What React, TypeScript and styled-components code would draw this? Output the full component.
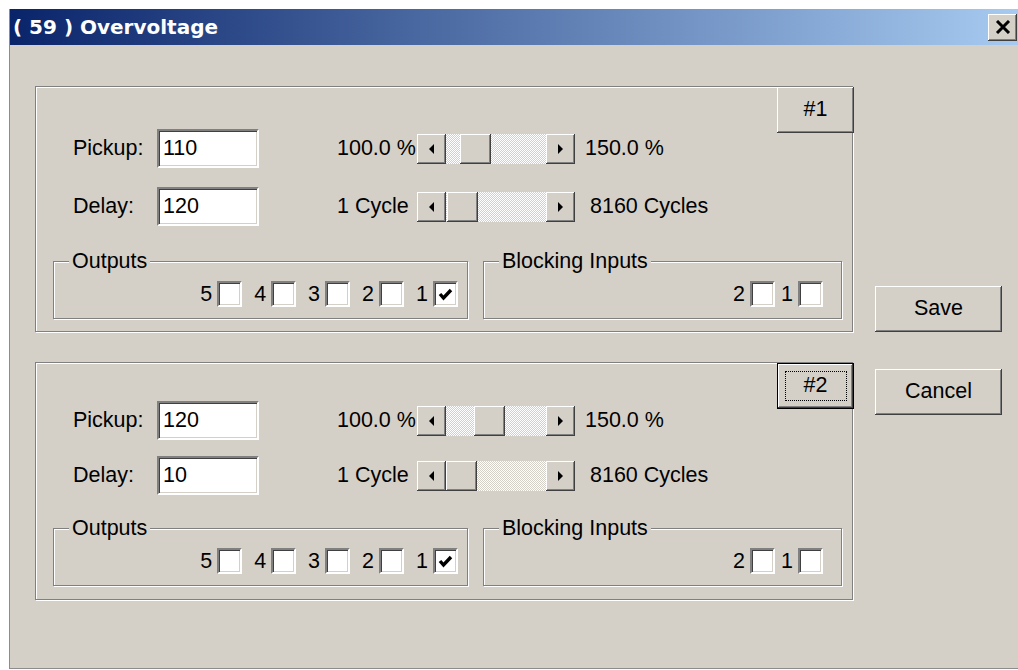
import React from "react";
import styled, { createGlobalStyle, css } from "styled-components";

const FACE = "#d4d0c8";
const SHADOW = "#808080";
const DARK = "#404040";
const LIGHT = "#ffffff";

const GlobalStyle = createGlobalStyle`
  html, body { margin: 0; padding: 0; background: #fff; }
  body {
    font-family: "Liberation Sans", Arial, sans-serif;
    font-size: 21.5px;
    color: #000;
  }
  #root { width: 1018px; height: 670px; overflow: hidden; }
`;

const raised = css`
  background: ${FACE};
  box-shadow: inset -1px -1px ${DARK}, inset 1px 1px ${LIGHT},
    inset -2px -2px ${SHADOW}, inset 2px 2px ${FACE};
`;

const sunken = css`
  box-sizing: border-box;
  border: 2px solid;
  border-color: ${SHADOW} ${LIGHT} ${LIGHT} ${SHADOW};
  box-shadow: inset 1px 1px ${DARK}, inset -1px -1px ${FACE};
  background: #fff;
`;

const etched = css`
  box-sizing: border-box;
  border: 1px solid ${SHADOW};
  box-shadow: inset 1px 1px ${LIGHT}, 1px 1px ${LIGHT};
`;

/* ---------- window frame ---------- */

const Window = styled.div`
  box-sizing: border-box;
  margin: 9px 0 0 9px;
  width: 1009px;
  height: 660px;
  background: ${FACE};
  border-left: 1px solid #8c8c8c;
  border-bottom: 1px solid #8c8c8c;
  display: flex;
  flex-direction: column;
`;

const TitleBar = styled.div`
  flex: none;
  height: 36px;
  display: flex;
  align-items: center;
  justify-content: space-between;
  padding: 0 1px 0 3px;
  background: linear-gradient(90deg, #0a246a 0%, #a6caf0 100%);
`;

const Title = styled.span`
  font-family: "DejaVu Sans", "Liberation Sans", sans-serif;
  font-weight: bold;
  font-size: 20px;
  color: #fff;
  white-space: pre;
`;

const CloseButton = styled.div`
  ${raised};
  width: 29px;
  height: 27px;
  display: flex;
  align-items: center;
  justify-content: center;
`;

const Body = styled.div`
  display: flex;
  align-items: flex-start;
  padding: 41px 0 0 25px;
`;

const PanelStack = styled.div`
  display: flex;
  flex-direction: column;
  gap: 30px;
`;

const SideColumn = styled.div`
  display: flex;
  flex-direction: column;
  gap: 37px;
  margin-left: 22px;
  padding-top: 200px;
`;

/* ---------- buttons ---------- */

const PushButton = styled.div<{ $width: number; $default?: boolean }>`
  ${raised};
  position: relative;
  box-sizing: border-box;
  width: ${(p) => p.$width}px;
  height: 46px;
  display: flex;
  align-items: center;
  justify-content: center;
  line-height: 1;
  ${(p) =>
    p.$default &&
    css`
      box-shadow: inset 0 0 0 1px #000, inset -2px -2px ${DARK},
        inset 2px 2px ${LIGHT}, inset -3px -3px ${SHADOW};
      &::after {
        content: "";
        position: absolute;
        inset: 8px 7px 8px 8px;
        border: 1px dotted #000;
      }
    `}
`;

const PanelButton = styled(PushButton)`
  position: absolute;
  top: 0;
  right: -2px;
`;

/* ---------- panel ---------- */

const Panel = styled.section<{ $height: number; $top: number }>`
  ${etched};
  position: relative;
  width: 818px;
  height: ${(p) => p.$height}px;
  padding-top: ${(p) => p.$top}px;
`;

const Fields = styled.div<{ $gap: number }>`
  display: flex;
  flex-direction: column;
  gap: ${(p) => p.$gap}px;
  padding-left: 37px;
`;

const FieldRow = styled.div`
  display: flex;
  align-items: center;
`;

const FieldLabel = styled.span`
  width: 84px;
`;

const TextBox = styled.input`
  ${sunken};
  width: 102px;
  height: 39px;
  padding: 0 0 0 4px;
  margin: 0;
  font: inherit;
  color: #000;
  outline: none;
`;

const RangeLabel = styled.span`
  width: 80px;
  margin-left: 78px;
  white-space: pre;
`;

const EndLabel = styled.span<{ $offset: number }>`
  margin-left: ${(p) => p.$offset}px;
  white-space: pre;
`;

const ScrollBar = styled.div`
  display: flex;
  width: 158px;
  height: 30px;
  background: repeating-conic-gradient(#ffffff 0 25%, ${FACE} 0 50%) 0 0 / 2px 2px;
`;

const ArrowButton = styled.div`
  ${raised};
  flex: none;
  width: 29px;
  height: 30px;
  display: flex;
  align-items: center;
  justify-content: center;
`;

const Lane = styled.div`
  flex: 1;
  display: flex;
`;

const Thumb = styled.div`
  ${raised};
  flex: none;
  width: 31px;
  height: 30px;
`;

/* ---------- group boxes ---------- */

const Groups = styled.div<{ $top: number }>`
  display: flex;
  gap: 15px;
  margin: ${(p) => p.$top}px 0 0 17px;
`;

const GroupBox = styled.div<{ $width: number; $right: number }>`
  ${etched};
  position: relative;
  width: ${(p) => p.$width}px;
  height: 58px;
  display: flex;
  justify-content: flex-end;
  align-items: flex-start;
  padding: 19px ${(p) => p.$right}px 0 0;
`;

const GroupTitle = styled.span`
  position: absolute;
  top: -13px;
  left: 15px;
  padding: 0 3px;
  line-height: 25px;
  background: ${FACE};
  white-space: pre;
`;

const CheckList = styled.div<{ $gap: number }>`
  display: flex;
  gap: ${(p) => p.$gap}px;
`;

const CheckItem = styled.label`
  display: flex;
  align-items: center;
  gap: 5px;
`;

const CheckBox = styled.span`
  ${sunken};
  width: 25px;
  height: 26px;
  display: flex;
  align-items: center;
  justify-content: center;
`;

/* ---------- drawings ---------- */

const Arrow = ({ dir }: { dir: "left" | "right" }) => (
  <svg width="5" height="10" viewBox="0 0 5 10">
    <polygon points={dir === "left" ? "5,0 5,10 0,5" : "0,0 0,10 5,5"} fill="#000" />
  </svg>
);

const CloseGlyph = () => (
  <svg width="16" height="14" viewBox="0 0 16 14">
    <path d="M2 1 L14 13 M14 1 L2 13" stroke="#000" strokeWidth="3" />
  </svg>
);

const Tick = () => (
  <svg width="15" height="13" viewBox="0 0 15 13">
    <path d="M2 6 L5.5 10 L13 2" stroke="#000" strokeWidth="3.4" fill="none" />
  </svg>
);

/* ---------- data ---------- */

type Setting = {
  id: number;
  pickup: number;
  delay: number;
  outputs: boolean[];
  blocking: boolean[];
  height: number;
  top: number;
  gap: number;
  groupTop: number;
  focused?: boolean;
};

const settings: Setting[] = [
  { id: 1, pickup: 110, delay: 120, outputs: [false, false, false, false, true], blocking: [false, false], height: 246, top: 42, gap: 19, groupTop: 35 },
  { id: 2, pickup: 120, delay: 10, outputs: [false, false, false, false, true], blocking: [false, false], height: 238, top: 38, gap: 16, groupTop: 33, focused: true },
];

const LANE_FREE = 158 - 58 - 31;

const Slider = ({ value, min, max }: { value: number; min: number; max: number }) => (
  <ScrollBar>
    <ArrowButton>
      <Arrow dir="left" />
    </ArrowButton>
    <Lane>
      <Thumb style={{ marginLeft: Math.round(((value - min) / (max - min)) * LANE_FREE) }} />
    </Lane>
    <ArrowButton>
      <Arrow dir="right" />
    </ArrowButton>
  </ScrollBar>
);

const Checks = ({ values, gap }: { values: boolean[]; gap: number }) => (
  <CheckList $gap={gap}>
    {values.map((on, i) => (
      <CheckItem key={i}>
        <span>{values.length - i}</span>
        <CheckBox>{on && <Tick />}</CheckBox>
      </CheckItem>
    ))}
  </CheckList>
);

const SettingPanel = ({ s }: { s: Setting }) => (
  <Panel $height={s.height} $top={s.top}>
    <PanelButton $width={77} $default={s.focused}>
      #{s.id}
    </PanelButton>
    <Fields $gap={s.gap}>
      <FieldRow>
        <FieldLabel>Pickup:</FieldLabel>
        <TextBox defaultValue={String(s.pickup)} />
        <RangeLabel>100.0 %</RangeLabel>
        <Slider value={s.pickup} min={100} max={150} />
        <EndLabel $offset={10}>150.0 %</EndLabel>
      </FieldRow>
      <FieldRow>
        <FieldLabel>Delay:</FieldLabel>
        <TextBox defaultValue={String(s.delay)} />
        <RangeLabel>1 Cycle</RangeLabel>
        <Slider value={s.delay} min={1} max={8160} />
        <EndLabel $offset={15}>8160 Cycles</EndLabel>
      </FieldRow>
    </Fields>
    <Groups $top={s.groupTop}>
      <GroupBox $width={415} $right={9}>
        <GroupTitle>Outputs</GroupTitle>
        <Checks values={s.outputs} gap={12} />
      </GroupBox>
      <GroupBox $width={359} $right={18}>
        <GroupTitle>Blocking Inputs</GroupTitle>
        <Checks values={s.blocking} gap={6} />
      </GroupBox>
    </Groups>
  </Panel>
);

export default function App() {
  return (
    <>
      <GlobalStyle />
      <Window>
        <TitleBar>
          <Title>( 59 ) Overvoltage</Title>
          <CloseButton>
            <CloseGlyph />
          </CloseButton>
        </TitleBar>
        <Body>
          <PanelStack>
            {settings.map((s) => (
              <SettingPanel key={s.id} s={s} />
            ))}
          </PanelStack>
          <SideColumn>
            <PushButton $width={127}>Save</PushButton>
            <PushButton $width={127}>Cancel</PushButton>
          </SideColumn>
        </Body>
      </Window>
    </>
  );
}
